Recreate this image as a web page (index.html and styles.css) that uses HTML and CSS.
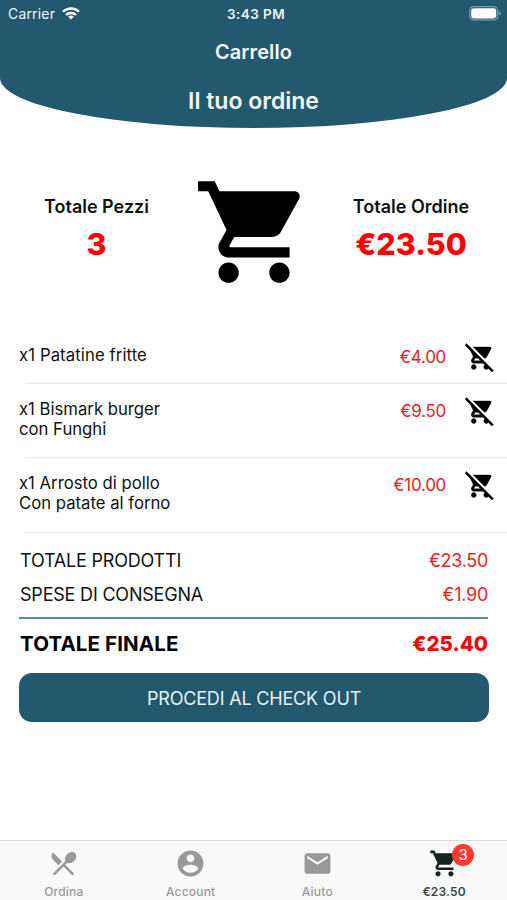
FILE: index.html
```html
<!DOCTYPE html>
<html lang="it">
<head>
<meta charset="utf-8">
<title>Carrello</title>
<link rel="stylesheet" href="styles.css">
</head>
<body>
<svg class="defs" width="0" height="0">
  <symbol id="cart" viewBox="0 0 24 24"><path d="M7 18c-1.1 0-1.99.9-1.99 2S5.9 22 7 22s2-.9 2-2-.9-2-2-2zM1 2v2h2l3.6 7.59-1.35 2.45c-.16.28-.25.61-.25.96 0 1.1.9 2 2 2h12v-2H7.42c-.14 0-.25-.11-.25-.25l.03-.12.9-1.63h7.45c.75 0 1.41-.41 1.75-1.03l3.58-6.49c.08-.14.12-.31.12-.48 0-.55-.45-1-1-1H5.21l-.94-2H1zm16 16c-1.1 0-1.99.9-1.99 2s.89 2 1.99 2 2-.9 2-2-.9-2-2-2z"/></symbol>
  <symbol id="remove" viewBox="0 0 24 24"><path d="M22.73 22.73L2.77 2.77 2 2l-.73-.73L0 2.54l4.39 4.39 2.21 4.66-1.35 2.45c-.16.28-.25.61-.25.96 0 1.1.9 2 2 2h7.46l1.38 1.38c-.5.36-.83.95-.83 1.62 0 1.1.89 2 1.99 2 .67 0 1.26-.33 1.62-.84L21.46 24l1.27-1.27zM7.42 15c-.14 0-.25-.11-.25-.25l.03-.12.9-1.63h2.36l2 2H7.42zm8.13-2c.75 0 1.41-.41 1.75-1.03l3.58-6.49c.08-.14.12-.31.12-.48 0-.55-.45-1-1-1H6.54l9.01 9zM7 18c-1.1 0-1.99.9-1.99 2S5.9 22 7 22s2-.9 2-2-.9-2-2-2z"/></symbol>
</svg>
<div class="app">
  <header class="header">
    <div class="status">
      <div class="carrier"><span>Carrier</span>
        <svg class="wifi" viewBox="0 0 18 13"><g fill="none" stroke="#fff" stroke-width="2.3"><path d="M1 4.8a11.4 11.4 0 0 1 16 0"/><path d="M4 8a7.2 7.2 0 0 1 10 0"/></g><path fill="#fff" d="M9 12.6L6.2 9.8a4 4 0 0 1 5.6 0z"/></svg>
      </div>
      <span class="time">3:43 PM</span>
      <div class="power">
        <svg class="battery" viewBox="0 0 32 15"><rect x=".7" y=".7" width="28" height="13.2" rx="3.8" fill="none" stroke="#7d9ead" stroke-width="1.2"/><rect x="2.2" y="2.2" width="25" height="10.2" rx="2.4" fill="#fff"/><path d="M30.2 5v4.6q1.5-.7 1.5-2.3T30.2 5z" fill="#7d9ead"/></svg>
      </div>
    </div>
    <h1 class="title">Carrello</h1>
    <h2 class="subtitle">Il tuo ordine</h2>
  </header>
  <section class="summary">
    <div class="stat"><span class="label">Totale Pezzi</span><span class="value">3</span></div>
    <svg class="bigcart"><use href="#cart"/></svg>
    <div class="stat"><span class="label">Totale Ordine</span><span class="value">€23.50</span></div>
  </section>
  <ul class="items">
    <li class="item"><div class="name"><span class="wide">x1 Patatine fritte</span></div><span class="price">€4.00</span><svg class="remove"><use href="#remove"/></svg></li>
    <li class="item tall"><div class="name"><span>x1 Bismark burger</span><span>con Funghi</span></div><span class="price">€9.50</span><svg class="remove"><use href="#remove"/></svg></li>
    <li class="item tall last"><div class="name"><span>x1 Arrosto di pollo</span><span>Con patate al forno</span></div><span class="price">€10.00</span><svg class="remove"><use href="#remove"/></svg></li>
  </ul>
  <section class="totals">
    <div class="row"><span>TOTALE PRODOTTI</span><span class="red">€23.50</span></div>
    <div class="row"><span>SPESE DI CONSEGNA</span><span class="red">€1.90</span></div>
    <div class="final"><span class="sum-label">TOTALE FINALE</span><span class="sum">€25.40</span></div>
    <button class="checkout">PROCEDI AL CHECK OUT</button>
  </section>
  <nav class="tabs">
    <div class="tab"><svg class="icon" viewBox="0 0 24 24"><path d="M8.1 13.34l2.83-2.83L3.91 3.5c-1.56 1.56-1.56 4.09 0 5.66l4.19 4.18zm6.78-1.81c1.53.71 3.68.21 5.27-1.38 1.91-1.91 2.28-4.65.81-6.12-1.46-1.46-4.2-1.1-6.12.81-1.59 1.59-2.09 3.74-1.38 5.27L3.7 19.87l1.41 1.41L12 14.41l6.88 6.88 1.41-1.41L13.41 13l1.47-1.47z"/></svg><span>Ordina</span></div>
    <div class="tab"><svg class="icon" viewBox="0 0 24 24"><path d="M12 2C6.48 2 2 6.48 2 12s4.48 10 10 10 10-4.48 10-10S17.52 2 12 2zm0 3c1.66 0 3 1.34 3 3s-1.34 3-3 3-3-1.34-3-3 1.34-3 3-3zm0 14.2c-2.5 0-4.71-1.28-6-3.22.03-1.99 4-3.08 6-3.08 1.99 0 5.97 1.09 6 3.08-1.29 1.94-3.5 3.22-6 3.22z"/></svg><span>Account</span></div>
    <div class="tab"><svg class="icon" viewBox="0 0 24 24"><path d="M20 4H4c-1.1 0-1.99.9-1.99 2L2 18c0 1.1.9 2 2 2h16c1.1 0 2-.9 2-2V6c0-1.1-.9-2-2-2zm0 4l-8 5-8-5V6l8 5 8-5v2z"/></svg><span>Aiuto</span></div>
    <div class="tab active"><svg class="icon"><use href="#cart"/></svg><span>€23.50</span><b class="badge">3</b></div>
  </nav>
</div>
</body>
</html>
```
FILE: styles.css
```css
* { box-sizing: border-box; margin: 0; padding: 0; }
body { background: #fff; font-family: Inter, "Liberation Sans", sans-serif; color: #111; }
.defs { display: none; }
svg { display: block; flex: none; }
span { white-space: nowrap; }
.app { width: 507px; height: 900px; display: flex; flex-direction: column; overflow: hidden; }

.header { height: 128px; flex: none; background: #23596e; border-radius: 0 0 50% 50% / 0 0 50px 50px; color: #fff; text-align: center; }
.status { height: 27px; display: grid; grid-template-columns: 1fr auto 1fr; align-items: center; padding: 0 6px 0 8px; font-size: 14px; color: #edf5f8; }
.carrier { display: flex; align-items: center; gap: 7px; letter-spacing: .18px; }
.wifi { width: 18px; height: 13px; }
.time { font-weight: 600; font-size: 13.5px; letter-spacing: .45px; padding-left: 3px; }
.power { display: flex; justify-content: flex-end; }
.battery { width: 32px; height: 15px; }
.title { height: 50px; line-height: 50px; font-size: 20px; letter-spacing: .1px; font-weight: 600; color: #f2f8fa; }
.subtitle { height: 50px; line-height: 49px; font-size: 23px; font-weight: 600; color: #f2f8fa; }

.summary { height: 202px; flex: none; display: grid; grid-template-columns: 193px 122px 192px; align-items: start; padding-top: 43px; }
.stat { display: flex; flex-direction: column; align-items: center; padding-top: 24px; }
.label { font-size: 18px; line-height: 24px; font-weight: 600; }
.value { font-size: 30.5px; line-height: 50px; font-weight: 800; color: #f00; }
.bigcart { width: 122px; height: 122px; fill: #000; }

.items { list-style: none; flex: none; }
.item { height: 54px; display: flex; align-items: flex-start; padding: 12px 12.5px 0 19px; background: linear-gradient(#e9e9e9, #e9e9e9) 25px 100% / 482px 1px no-repeat; }
.item.tall { height: 74px; }
.item.last { height: 75px; }
.name { flex: 1; display: flex; flex-direction: column; font-size: 16.7px; line-height: 20px; padding-top: 3px; }
.name span { align-self: flex-start; }
.name .wide { letter-spacing: .1px; }
.price { font-size: 17px; line-height: 30px; letter-spacing: -.3px; color: #ed1c24; margin-right: 18.5px; }
.remove { width: 30px; height: 30px; fill: #000; stroke: #000; stroke-width: .3px; overflow: visible; }

.totals { padding: 10px 19px 0 20px; flex: none; }
.row { height: 34px; display: flex; justify-content: space-between; align-items: center; font-size: 18px; letter-spacing: -.2px; }
.red { color: #ed1c24; letter-spacing: -.3px; }
.final { height: 56px; margin-top: 6px; border-top: 2px solid #5f8b98; margin-left: -1px; padding: 0 0 6px 1px; display: flex; justify-content: space-between; align-items: center; font-size: 20.5px; color: #000; }
.sum-label { font-weight: 750; letter-spacing: .12px; }
.sum { color: #f00; font-weight: 800; }
.checkout { display: block; width: 470px; height: 49px; margin-left: -1px; padding-top: 1px; border: 0; border-radius: 13px; background: #23596e; color: #e6f1f5; font: 400 18px Inter, sans-serif; letter-spacing: -.18px; }

.tabs { margin-top: auto; height: 60px; flex: none; display: grid; grid-template-columns: repeat(4, 1fr); background: #f9f9f9; border-top: 1px solid #dedede; color: #999; }
.tab { position: relative; display: flex; flex-direction: column; align-items: center; padding: 7px 0 0 1px; font-size: 12px; font-weight: 500; letter-spacing: .2px; }
.tab .icon { width: 31px; height: 31px; fill: #999; }
.tab span { line-height: 14px; margin-top: 6px; }
.tab.active { color: #3b4542; }
.tab.active span { font-weight: 600; }
.tab.active .icon { fill: #14231e; }
.badge { position: absolute; left: 72px; top: 3px; width: 22px; height: 22px; border-radius: 50%; background: #fb3b30; color: #fff; font-weight: 400; font-size: 15px; line-height: 22px; letter-spacing: 0; text-align: center; }
```
